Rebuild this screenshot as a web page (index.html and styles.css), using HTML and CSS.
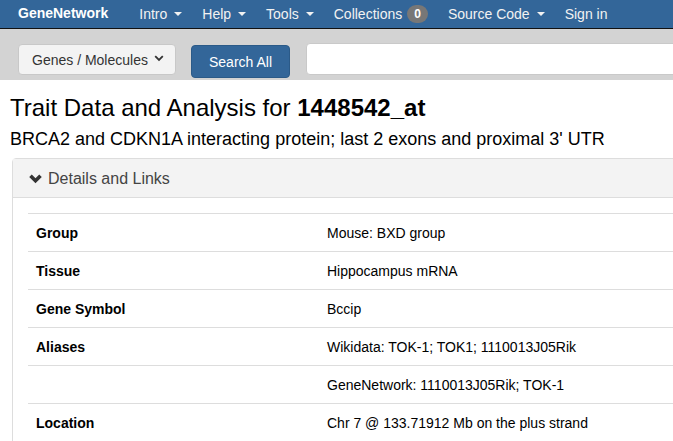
FILE: index.html
```html
<!DOCTYPE html>
<html lang="en">
<head>
<meta charset="utf-8">
<title>Trait Data and Analysis for 1448542_at</title>
<link rel="stylesheet" href="styles.css">
</head>
<body>
<nav class="navbar">
  <a class="brand" href="#">GeneNetwork</a>
  <ul class="nav">
    <li class="nav-item">Intro<span class="caret"></span></li>
    <li class="nav-item">Help<span class="caret"></span></li>
    <li class="nav-item">Tools<span class="caret"></span></li>
    <li class="nav-item">Collections<span class="badge">0</span></li>
    <li class="nav-item">Source Code<span class="caret"></span></li>
    <li class="nav-item">Sign in</li>
  </ul>
</nav>
<div class="searchbar">
  <button class="select-btn" type="button">Genes / Molecules
    <svg class="select-chev" width="10" height="7" viewBox="0 0 10 7"><polyline points="1.2,1.2 5,5 8.8,1.2" fill="none" stroke="#333" stroke-width="1.8"/></svg>
  </button>
  <button class="search-btn" type="button">Search All</button>
  <input class="search-input" type="text">
</div>
<main class="content">
  <h1 class="title">Trait Data and Analysis for <b>1448542_at</b></h1>
  <p class="subtitle">BRCA2 and CDKN1A interacting protein; last 2 exons and proximal 3' UTR</p>
  <section class="panel">
    <div class="panel-heading">
      <svg class="chev" width="13" height="10" viewBox="0 0 13 10"><polyline points="1.5,1.8 6.5,6.8 11.5,1.8" fill="none" stroke="#333" stroke-width="3.6" stroke-linecap="butt" stroke-linejoin="miter"/></svg>
      <span>Details and Links</span>
    </div>
    <div class="panel-body">
      <table class="details">
        <colgroup><col class="col-label"><col></colgroup>
        <tbody>
          <tr><th>Group</th><td>Mouse: BXD group</td></tr>
          <tr><th>Tissue</th><td>Hippocampus mRNA</td></tr>
          <tr><th>Gene Symbol</th><td>Bccip</td></tr>
          <tr><th>Aliases</th><td>Wikidata: TOK-1; TOK1; 1110013J05Rik</td></tr>
          <tr><th></th><td>GeneNetwork: 1110013J05Rik; TOK-1</td></tr>
          <tr><th>Location</th><td>Chr 7 @ 133.71912 Mb on the plus strand</td></tr>
          <tr><th>&nbsp;</th><td>&nbsp;</td></tr>
        </tbody>
      </table>
    </div>
  </section>
</main>
</body>
</html>
```

FILE: styles.css
```css
html, body {
  margin: 0;
  padding: 0;
  overflow: hidden;
  background: #fff;
}
body {
  font-family: "Liberation Sans", Arial, sans-serif;
  font-size: 14px;
  color: #333;
}

/* navbar */
.navbar {
  display: flex;
  align-items: center;
  height: 28px;
  background: #336699;
  border-bottom: 1px solid #111;
  padding-left: 18px;
  white-space: nowrap;
}
.brand {
  color: #fff;
  font-weight: bold;
  font-size: 14px;
  text-decoration: none;
  margin-right: 21px;
  position: relative;
  top: -1px;
}
.nav {
  display: flex;
  list-style: none;
  margin: 0;
  padding: 0;
}
.nav-item {
  display: flex;
  align-items: center;
  padding: 0 10px;
  color: #f2f2f2;
  font-size: 14px;
  line-height: 20px;
}
.caret {
  display: inline-block;
  width: 0;
  height: 0;
  margin-left: 7px;
  border-top: 4px solid #f2f2f2;
  border-left: 4px solid transparent;
  border-right: 4px solid transparent;
}
.badge {
  display: inline-block;
  margin-left: 5px;
  padding: 3px 7px;
  font-size: 12px;
  font-weight: bold;
  line-height: 12px;
  color: #fff;
  background: #777;
  border-radius: 10px;
}

/* search bar */
.searchbar {
  display: flex;
  align-items: flex-start;
  height: 51px;
  box-sizing: border-box;
  padding: 14px 0 0 18px;
  background: #d3d3d3;
  white-space: nowrap;
}
.select-btn {
  flex: none;
  display: flex;
  align-items: center;
  width: 158px;
  height: 31px;
  margin-top: 1px;
  padding: 0 0 0 13px;
  box-sizing: border-box;
  font-family: inherit;
  font-size: 14px;
  color: #333;
  background: #f3f3f3;
  border: 1px solid #c8c8c8;
  border-radius: 4px;
}
.select-chev {
  margin-left: 6px;
  margin-top: -2px;
}
.search-btn {
  flex: none;
  width: 99px;
  height: 33px;
  margin: 2px 0 0 15px;
  padding: 0;
  box-sizing: border-box;
  font-family: inherit;
  font-size: 14px;
  color: #fff;
  background: #336699;
  border: 1px solid #2b5a88;
  border-radius: 4px;
}
.search-input {
  flex: none;
  width: 600px;
  height: 32px;
  margin-left: 16px;
  box-sizing: border-box;
  background: #fff;
  border: 1px solid #c9c9c9;
  border-radius: 4px;
}

/* content */
.content {
  padding-top: 14px;
}
.title {
  margin: 0 0 6px 10px;
  font-size: 24px;
  line-height: 28px;
  font-weight: normal;
  color: #000;
  white-space: nowrap;
}
.title b {
  font-weight: bold;
}
.subtitle {
  margin: 0 0 8px 10px;
  font-size: 18px;
  line-height: 22px;
  color: #000;
  white-space: nowrap;
}
.panel {
  margin-left: 12px;
  width: 1000px;
  border: 1px solid #ddd;
  border-radius: 4px;
}
.panel-heading {
  display: flex;
  align-items: center;
  height: 39px;
  box-sizing: border-box;
  padding: 0 16px;
  background: #f3f3f3;
  border-bottom: 1px solid #ddd;
  font-size: 16px;
  color: #444;
}
.chev {
  margin-right: 6px;
  margin-top: 1px;
}
.panel-heading span {
  position: relative;
  top: 1px;
}
.panel-body {
  padding: 15px;
}
.details {
  width: 100%;
  border-collapse: collapse;
  table-layout: fixed;
}
.col-label {
  width: 291px;
}
.details th,
.details td {
  padding: 9px 8px 7px;
  line-height: 21px;
  border-top: 1px solid #ddd;
  text-align: left;
  vertical-align: top;
  color: #000;
  font-size: 14px;
  white-space: nowrap;
}
.details th {
  font-weight: bold;
}
.details td {
  font-weight: normal;
}
```
